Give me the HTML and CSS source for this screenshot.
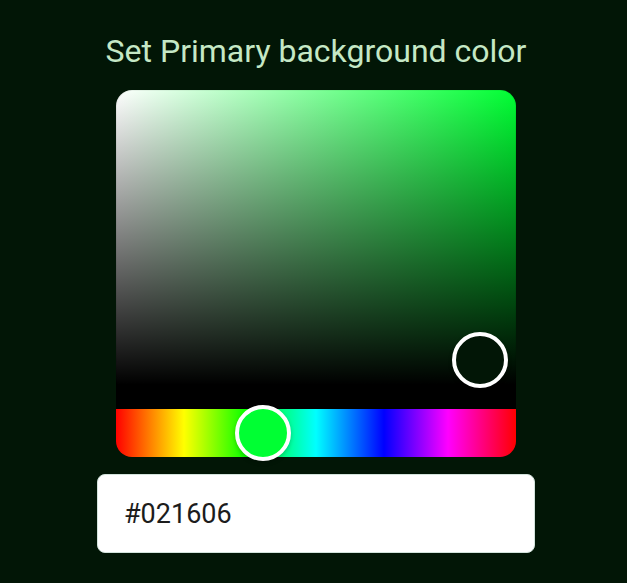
FILE: index.html
```html
<!DOCTYPE html>
<html>
<head>
<meta charset="utf-8">
<link rel="stylesheet" href="styles.css">
</head>
<body>
<div class="page">
  <h1 class="title">Set Primary background color</h1>
  <div class="picker">
    <div class="saturation">
      <div class="sat-pointer"></div>
    </div>
    <div class="hue">
      <div class="hue-pointer"></div>
    </div>
  </div>
  <div class="input-box">#021606</div>
</div>
</body>
</html>
```
FILE: styles.css
```css
html, body {
  margin: 0;
  padding: 0;
  background: #021606;
  height: 100%;
}
.page {
  width: 438px;
  margin-left: 97px;
  display: flex;
  flex-direction: column;
  align-items: center;
  font-family: Roboto, "Liberation Sans", sans-serif;
}
.title {
  margin: 31px 0 0 0;
  font-weight: 400;
  font-size: 32px;
  line-height: 40px;
  color: #c5e8c5;
  white-space: nowrap;
}
.picker {
  margin-top: 19px;
  width: 400px;
  display: flex;
  flex-direction: column;
}
.saturation {
  position: relative;
  height: 295px;
  border-bottom: 24px solid #000;
  border-radius: 16px 16px 0 0;
  background-image: linear-gradient(to top, #000, rgba(0,0,0,0)), linear-gradient(to right, #fff, hsl(132, 100%, 50%));
  box-shadow: inset 0 0 0 1px rgba(0,0,0,.05);
}
.sat-pointer {
  position: absolute;
  left: 90.9%;
  top: 91.4%;
  width: 48px;
  height: 48px;
  transform: translate(-50%, -50%);
  border: 4px solid #fff;
  border-radius: 50%;
  background: #021606;
  box-shadow: 0 2px 4px rgba(0,0,0,.2);
}
.hue {
  position: relative;
  height: 48px;
  border-radius: 0 0 16px 16px;
  background: linear-gradient(to right, red 0, #ff0 17%, #0f0 33%, #0ff 50%, #00f 67%, #f0f 83%, red);
}
.hue-pointer {
  position: absolute;
  left: 36.7%;
  top: 50%;
  width: 48px;
  height: 48px;
  transform: translate(-50%, -50%);
  border: 4px solid #fff;
  border-radius: 50%;
  background: #00ff33;
  box-shadow: 0 2px 4px rgba(0,0,0,.2);
}
.input-box {
  margin-top: 17px;
  box-sizing: border-box;
  width: 438px;
  height: 79px;
  background: #fff;
  border: 1px solid #d3e3dc;
  border-radius: 8px;
  padding-left: 26px;
  display: flex;
  align-items: center;
  font-size: 27px;
  color: #1c1c1c;
}
```
